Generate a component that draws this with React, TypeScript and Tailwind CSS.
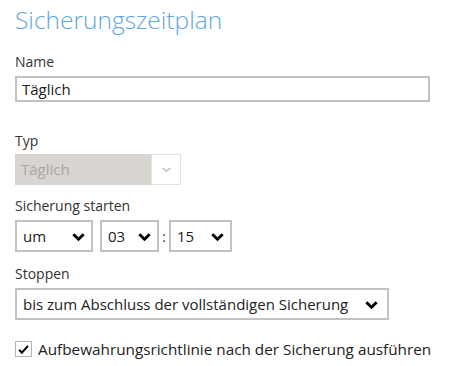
import React from "react";

const Chevron = ({ className = "" }: { className?: string }) => (
  <svg viewBox="0 0 16 16" className={className} fill="none">
    <path d="M2.5 5.5 L8 11 L13.5 5.5" stroke="currentColor" strokeWidth="3" strokeLinecap="butt" strokeLinejoin="miter" />
  </svg>
);

const ThinChevron = ({ className = "" }: { className?: string }) => (
  <svg viewBox="0 0 16 16" className={className} fill="none">
    <path d="M3 6 L8 10 L13 6" stroke="currentColor" strokeWidth="2" />
  </svg>
);

const Label = ({ children }: { children: React.ReactNode }) => (
  <div className="text-[14px] leading-[18px] text-[#333]">{children}</div>
);

const Select = ({ text, width, gap = false }: { text: string; width: string; gap?: boolean }) => (
  <div
    className={`flex items-center h-[32px] border-2 border-[#c2c2c2] bg-white pl-[6px] pr-[5px] text-[15px] text-[#222] ${gap ? "justify-start gap-[16px]" : "justify-between"} ${width}`}
  >
    <span>{text}</span>
    <Chevron className="w-[15px] h-[15px] text-black" />
  </div>
);

export default function App() {
  return (
    <div
      className="w-[462px] h-[366px] bg-white pl-[15px] pt-[3px]"
      style={{ fontFamily: '"Open Sans", "Noto Sans", sans-serif' }}
    >
      <div className="text-[24.5px] leading-[34px] font-light text-[#62a6dd]">Sicherungszeitplan</div>

      <div className="mt-[16px]">
        <Label>Name</Label>
      </div>
      <div className="mt-[5px] w-[415px] h-[26px] border-2 border-[#c2c2c2] flex items-center pl-[5px] text-[15px] text-[#222]">
        Täglich
      </div>

      <div className="mt-[30px]">
        <Label>Typ</Label>
      </div>
      <div className="mt-[4px] flex w-[166px] h-[31px]">
        <div className="flex-1 bg-[#d8d4cf] flex items-center pl-[6px] text-[15px] text-[#a9a6a2]">Täglich</div>
        <div className="w-[30px] bg-white border border-[#e2e2e2] flex items-center justify-center">
          <ThinChevron className="w-[13px] h-[13px] text-[#c4c4c4]" />
        </div>
      </div>

      <div className="mt-[12px]">
        <Label>Sicherung starten</Label>
      </div>
      <div className="mt-[5px] flex items-center">
        <Select text="um" width="w-[78px]" />
        <div className="w-[7px]" />
        <Select text="03" width="w-[59px]" />
        <div className="w-[10px] text-center text-[14px] text-[#333]">:</div>
        <Select text="15" width="w-[63px]" />
      </div>

      <div className="mt-[13px]">
        <Label>Stoppen</Label>
      </div>
      <div className="mt-[5px]">
        <Select text="bis zum Abschluss der vollständigen Sicherung" width="w-[374px]" gap />
      </div>

      <div className="mt-[20px] flex items-center gap-[6px]">
        <div className="w-[17px] h-[16px] border border-[#b5b5b5] bg-white flex items-center justify-center">
          <svg viewBox="0 0 16 16" className="w-[13px] h-[13px]">
            <path d="M2.5 8.5 L6 12 L13.5 3.5" stroke="black" strokeWidth="2.4" fill="none" />
          </svg>
        </div>
        <span className="text-[15.3px] leading-[18px] text-[#222]">Aufbewahrungsrichtlinie nach der Sicherung ausführen</span>
      </div>
    </div>
  );
}
